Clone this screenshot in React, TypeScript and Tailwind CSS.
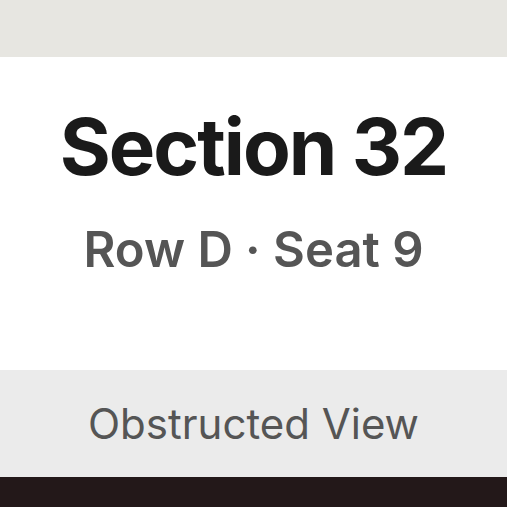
export default function App() {
  return (
    <div className="w-[507px] h-[507px] flex flex-col overflow-hidden" style={{ fontFamily: "Inter, 'Noto Sans', sans-serif" }}>
      <div className="h-[57px] bg-[#e7e6e1] shrink-0" />
      <div className="h-[313px] bg-white flex flex-col items-center pt-[51px] shrink-0">
        <div className="text-[78px] leading-none font-bold text-[#1a1a1a] tracking-[-2px]">Section 32</div>
        <div className="mt-[39px] text-[49px] leading-none font-semibold text-[#555555]">Row D · Seat 9</div>
      </div>
      <div className="h-[107px] bg-[#ebebeb] flex items-center justify-center shrink-0">
        <div className="text-[42px] leading-none font-normal text-[#555555]">Obstructed View</div>
      </div>
      <div className="flex-1 bg-[#231819]" />
    </div>
  );
}
